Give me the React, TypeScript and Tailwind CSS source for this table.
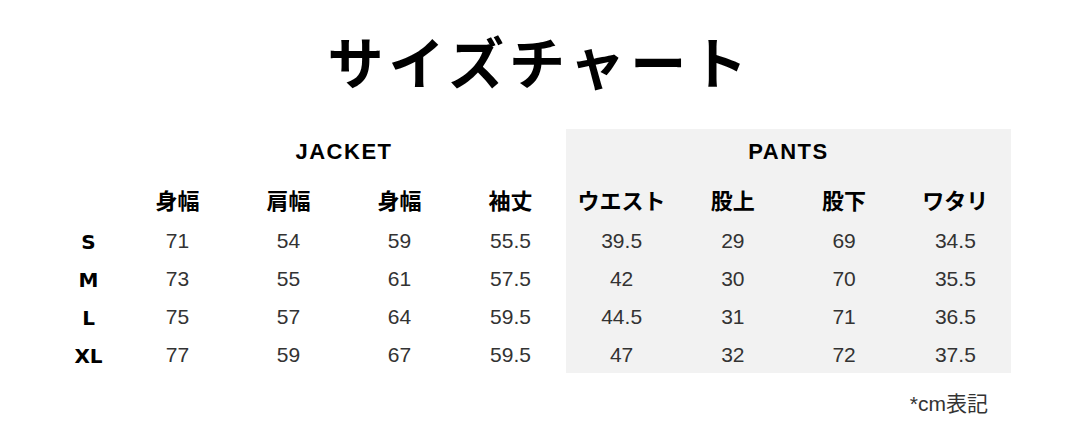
import React from "react";

const jacketHeads = ["身幅", "肩幅", "身幅", "袖丈"];
const pantsHeads = ["ウエスト", "股上", "股下", "ワタリ"];
const sizes = ["S", "M", "L", "XL"];
const jacket = [
  ["71", "54", "59", "55.5"],
  ["73", "55", "61", "57.5"],
  ["75", "57", "64", "59.5"],
  ["77", "59", "67", "59.5"],
];
const pants = [
  ["39.5", "29", "69", "34.5"],
  ["42", "30", "70", "35.5"],
  ["44.5", "31", "71", "36.5"],
  ["47", "32", "72", "37.5"],
];

const jp = { fontFamily: '"Noto Sans CJK JP", "Noto Sans", sans-serif' };
const lat = { fontFamily: '"Liberation Sans", "Noto Sans CJK JP", sans-serif' };

function Block({ title, heads, rows, gray }: { title: string; heads: string[]; rows: string[][]; gray?: boolean }) {
  return (
    <div className={gray ? "w-[445px] bg-[#f2f2f2]" : "w-[444px]"}>
      <div className="h-[46px] flex items-center justify-center pb-[2px]">
        <span className="text-[22px] font-bold tracking-[1.5px] text-black" style={lat}>
          {title}
        </span>
      </div>
      <div className="grid grid-cols-4 h-[46px] items-center">
        {heads.map((h, i) => (
          <div key={i} className="text-center text-[22px] font-bold text-black leading-none pt-[2px]" style={jp}>
            {h}
          </div>
        ))}
      </div>
      {rows.map((r, ri) => (
        <div key={ri} className="grid grid-cols-4 h-[38px] items-center">
          {r.map((v, vi) => (
            <div key={vi} className="text-center text-[21px] text-[#333] leading-none" style={lat}>
              {v}
            </div>
          ))}
        </div>
      ))}
    </div>
  );
}

export default function App() {
  return (
    <div className="w-[1080px] h-[444px] bg-white overflow-hidden">
      <div className="h-[129px] flex items-center justify-center pb-[10px]">
        <h1 className="text-[56px] font-bold tracking-[5px] text-black leading-none" style={jp}>
          サイズチャート
        </h1>
      </div>
      <div className="flex pl-[55px]">
        <div className="w-[67px] pt-[92px]">
          {sizes.map((s) => (
            <div key={s} className="h-[38px] flex items-center justify-center pt-[3px]">
              <span
                className="text-[20px] font-bold text-black leading-none"
                style={{ fontFamily: '"DejaVu Sans", "Liberation Sans", sans-serif' }}
              >
                {s}
              </span>
            </div>
          ))}
        </div>
        <Block title="JACKET" heads={jacketHeads} rows={jacket} />
        <Block title="PANTS" heads={pantsHeads} rows={pants} gray />
      </div>
      <div className="flex justify-end pr-[92px] mt-[20px]">
        <span className="text-[21px] text-[#333] leading-none" style={lat}>
          *cm表記
        </span>
      </div>
    </div>
  );
}
